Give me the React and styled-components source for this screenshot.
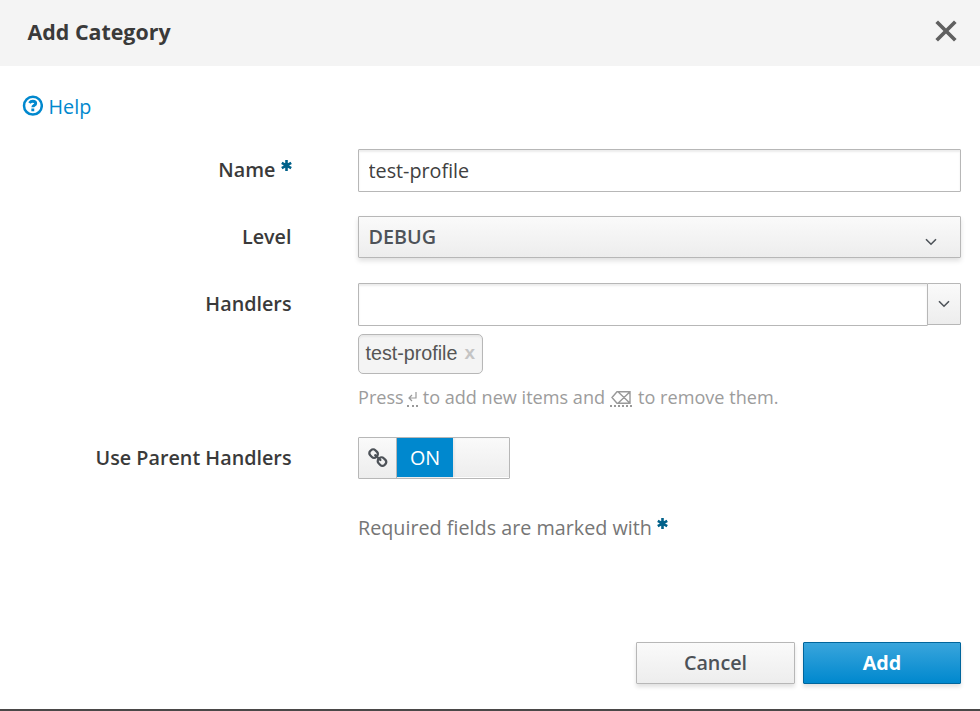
import React from 'react';
import styled, { createGlobalStyle, css } from 'styled-components';

const GlobalStyle = createGlobalStyle`
  * { box-sizing: border-box; }
  body { margin: 0; background: #fff; overflow: hidden; }
  button, input { font: inherit; letter-spacing: inherit; }
`;

const raised = css`
  border: 1px solid #b7b7b7;
  border-radius: 1px;
  color: #4d5258;
  background: linear-gradient(#fafafa, #ededed);
`;

const Dialog = styled.div`
  display: flex;
  flex-direction: column;
  width: 980px;
  height: 711px;
  border-bottom: 2px solid #4a4848;
  background: #fff;
  color: #3a3a3a;
  font: 400 19.75px/32px "Open Sans", sans-serif;
`;

const Header = styled.header`
  display: flex;
  justify-content: space-between;
  height: 66px;
  padding: 16px 23.5px 0 27.5px;
  background: #f4f4f4;
`;

const Title = styled.h1`
  margin: 0;
  font-size: 21.4px;
  font-weight: 700;
  line-height: 32px;
`;

const CloseButton = styled.button`
  display: block;
  width: 22px;
  height: 22px;
  margin-top: 4px;
  padding: 0;
  border: 0;
  background: none;
  svg { display: block; }
`;

const HelpLink = styled.a`
  display: flex;
  align-items: center;
  align-self: flex-start;
  gap: 5.5px;
  height: 32px;
  margin: 25px 0 26px 22px;
  color: #0088ce;
  svg { margin-top: -4px; }
`;

const Row = styled.div`
  display: grid;
  grid-template-columns: 291.5px 603px;
  column-gap: 66.5px;
  margin-bottom: ${(p) => p.$gap ?? 24}px;
`;

const Label = styled.label`
  display: flex;
  justify-content: flex-end;
  gap: 5px;
  height: 42px;
  line-height: 42px;
  font-weight: 600;
  svg { margin-top: 11px; }
`;

const TextInput = styled.input`
  display: block;
  width: ${(p) => p.$width ?? 603}px;
  height: 43px;
  padding: 0 9.5px;
  border: 1px solid #b7b7b7;
  border-radius: 1px;
  outline: 0;
  background: #fff;
  box-shadow: inset 0 2px 2px rgba(3, 3, 3, 0.075);
  color: #404040;
`;

const Select = styled.button`
  ${raised}
  display: flex;
  align-items: center;
  justify-content: space-between;
  width: 603px;
  height: 42px;
  margin-bottom: 1px;
  padding: 0 23px 0 9.5px;
  box-shadow: 0 3px 5px rgba(3, 3, 3, 0.12);
  font-weight: 600;
  svg { margin-top: 9px; }
`;

const InputGroup = styled.div`
  display: flex;
  align-items: flex-start;
`;

const DropButton = styled.button`
  ${raised}
  display: flex;
  align-items: center;
  justify-content: center;
  width: 34px;
  height: 42px;
  margin-left: -1px;
  padding: 0;
`;

const Tag = styled.span`
  display: flex;
  align-items: center;
  justify-content: space-between;
  width: 125px;
  height: 40px;
  margin-top: 8px;
  padding: 0 7px 2px 6.5px;
  border: 1px solid #b7b7b7;
  border-radius: 5px;
  background: #f4f4f4;
  box-shadow: inset 0 2px 2px rgba(3, 3, 3, 0.05);
  color: #555;
  font: 19.7px/22px "Liberation Sans", Arial, sans-serif;
`;

const TagRemove = styled.b`
  color: #c4c4c4;
  font-size: 19px;
`;

const Hint = styled.p`
  display: flex;
  margin: 7px 0 1px;
  color: #9c9c9c;
  font-size: 18.1px;
  line-height: 32px;
  white-space: pre;
`;

const Key = styled.abbr`
  display: flex;
  align-items: center;
  justify-content: center;
  width: ${(p) => p.$width}px;
  height: 18px;
  margin: 8px ${(p) => p.$after ?? 5}px 0 ${(p) => p.$before ?? 4}px;
  border-bottom: 2px dotted #999;
`;

const Toggle = styled.div`
  ${raised}
  display: flex;
  width: 152px;
  height: 42px;
`;

const ToggleIcon = styled.span`
  display: flex;
  align-items: center;
  justify-content: center;
  width: 38px;
  border-right: 1px solid #b7b7b7;
`;

const ToggleOn = styled.span`
  width: 56px;
  height: 39px;
  background: #0088ce;
  color: #fff;
  line-height: 40px;
  text-align: center;
`;

const ToggleOff = styled.span`
  flex: 1;
  border-bottom: 1px solid #fff;
  box-shadow: inset 2px 0 2px rgba(3, 3, 3, 0.05);
`;

const RequiredNote = styled.p`
  display: flex;
  grid-column: 2;
  gap: 5px;
  margin: 0;
  color: #767676;
  svg { margin-top: 6px; }
`;

const Footer = styled.footer`
  display: flex;
  justify-content: flex-end;
  gap: 8px;
  margin-top: auto;
  padding: 0 19px 25px 0;
`;

const Button = styled.button`
  ${raised}
  width: ${(p) => (p.$primary ? 158 : 159)}px;
  height: 42px;
  padding: 0 0 1px;
  box-shadow: 0 3px 4px rgba(3, 3, 3, 0.12);
  font-weight: 600;
  ${(p) => p.$primary && css`
    border-color: #00659c;
    background: linear-gradient(#39a5dc, #0088ce);
    color: #fff;
    font-weight: 700;
  `}
`;

const Asterisk = () => (
  <svg width="11" height="11" viewBox="0 0 11 11" stroke="#00618a" strokeWidth="2.6">
    <path d="M5.5 0v11M.8 2.8l9.4 5.4M.8 8.2l9.4-5.4" />
  </svg>
);

const Chevron = () => (
  <svg width="12" height="8" viewBox="0 0 12 8" fill="none" stroke="#4d5258" strokeWidth="1.6">
    <path d="M1 1.2l5 5 5-5" />
  </svg>
);

const ChainIcon = () => (
  <svg width="20" height="20" viewBox="0 0 20 20" fill="none" stroke="#4d5258" strokeWidth="2.3" strokeLinecap="round">
    <rect x="2" y="1.4" width="7.2" height="8.4" rx="3" transform="rotate(-45 5.6 5.6)" />
    <rect x="10.4" y="9.4" width="7.2" height="8.4" rx="3" transform="rotate(-45 14 13.6)" />
    <path d="M7.2 7.2l5.2 4.8" />
  </svg>
);

export default function App() {
  return (
    <>
      <GlobalStyle />
      <Dialog role="dialog">
        <Header>
          <Title>Add Category</Title>
          <CloseButton aria-label="Close">
            <svg width="22" height="22" viewBox="0 0 22 22" stroke="#606060" strokeWidth="3.7">
              <path d="M1.7 1.7l18.6 18.6M20.3 1.7L1.7 20.3" />
            </svg>
          </CloseButton>
        </Header>
        <HelpLink>
          <svg width="21" height="21" viewBox="0 0 21 21" fill="none" stroke="#0088ce">
            <circle cx="10.9" cy="10.7" r="8.9" strokeWidth="2.5" />
            <path d="M7.4 8C8.3 6.8 9.4 6.3 10.8 6.3c1.7 0 2.9.8 2.9 2.1 0 2-2.9 1.7-2.9 3.9M10.8 13.5v2.8" strokeWidth="2.9" />
          </svg>
          Help
        </HelpLink>
        <Row>
          <Label htmlFor="name">Name<Asterisk /></Label>
          <TextInput id="name" defaultValue="test-profile" />
        </Row>
        <Row>
          <Label>Level</Label>
          <Select>DEBUG<Chevron /></Select>
        </Row>
        <Row $gap={23}>
          <Label htmlFor="handlers">Handlers</Label>
          <div>
            <InputGroup>
              <TextInput id="handlers" $width={570} />
              <DropButton aria-label="Show handlers"><Chevron /></DropButton>
            </InputGroup>
            <Tag>test-profile<TagRemove>x</TagRemove></Tag>
            <Hint>
              Press
              <Key $width={11} $before={3}>
                <svg width="9" height="11" viewBox="0 0 9 11" fill="none" stroke="#999" strokeWidth="1.2">
                  <path d="M8 0v6H1M4 3L1 6l3 3" />
                </svg>
              </Key>
              to add new items and
              <Key $width={22} $before={5} $after={6}>
                <svg width="20" height="13" viewBox="0 0 20 13" fill="none" stroke="#999" strokeWidth="1.4">
                  <path d="M1 6.5L6 .7h13v11.6H6zM7 .7l12 11.6M19 .7L7 12.3" />
                </svg>
              </Key>
              to remove them.
            </Hint>
          </div>
        </Row>
        <Row $gap={33}>
          <Label>Use Parent Handlers</Label>
          <Toggle role="switch" aria-checked="true">
            <ToggleIcon><ChainIcon /></ToggleIcon>
            <ToggleOn>ON</ToggleOn>
            <ToggleOff />
          </Toggle>
        </Row>
        <Row>
          <RequiredNote>Required fields are marked with<Asterisk /></RequiredNote>
        </Row>
        <Footer>
          <Button>Cancel</Button>
          <Button $primary>Add</Button>
        </Footer>
      </Dialog>
    </>
  );
}
